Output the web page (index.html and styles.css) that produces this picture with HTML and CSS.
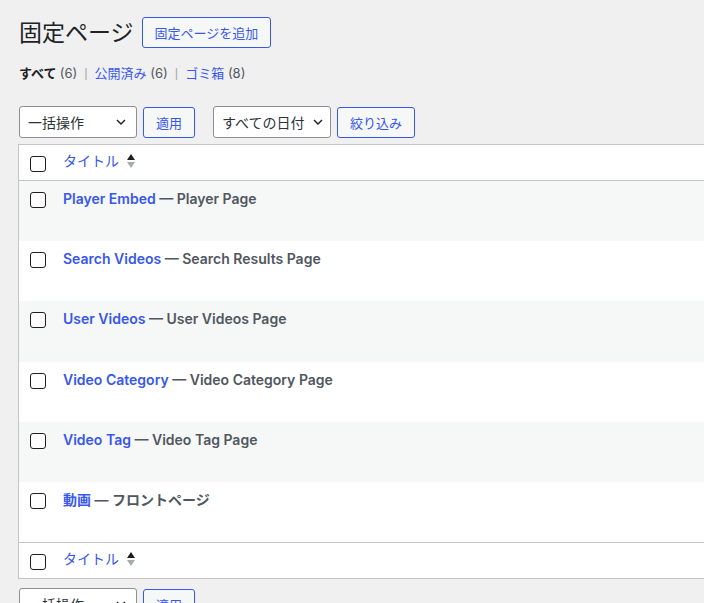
FILE: index.html
```html
<!DOCTYPE html>
<html lang="ja">
<head>
  <meta charset="UTF-8">
  <title>固定ページ</title>
  <link rel="stylesheet" href="styles.css">
</head>
<body>
  <div class="wrap">
    <!-- Page heading -->
    <div class="heading">
      <h1>固定ページ</h1>
      <a class="btn" href="#">固定ページを追加</a>
    </div>

    <ul class="subsubsub">
      <li class="current">すべて <span class="count">(6)</span></li>
      <li class="sep">|</li>
      <li><a href="#">公開済み</a> <span class="count">(6)</span></li>
      <li class="sep">|</li>
      <li><a href="#">ゴミ箱</a> <span class="count">(8)</span></li>
    </ul>

    <!-- Top toolbar -->
    <div class="tablenav">
      <div class="select bulk">
        <span>一括操作</span>
        <svg width="10" height="6" viewBox="0 0 10 6"><path d="M1 1l4 4 4-4" fill="none" stroke="#1e1e1e" stroke-width="1.4"/></svg>
      </div>
      <a class="btn" href="#">適用</a>
      <div class="select dates">
        <span>すべての日付</span>
        <svg width="10" height="6" viewBox="0 0 10 6"><path d="M1 1l4 4 4-4" fill="none" stroke="#1e1e1e" stroke-width="1.4"/></svg>
      </div>
      <a class="btn" href="#">絞り込み</a>
    </div>

    <table class="list">
      <thead>
        <tr class="head">
          <th class="check"><span class="box"></span></th>
          <th class="title"><a href="#">タイトル</a>
            <svg class="sort" width="10" height="16" viewBox="0 0 10 16"><path d="M5 1l4 6H1z" fill="#1e1e1e"/><path d="M5 15l4-6H1z" fill="#a7aaad"/></svg>
          </th>
        </tr>
      </thead>
      <tbody>
        <tr class="alt">
          <td class="check"><span class="box"></span></td>
          <td class="title"><a href="#">Player Embed</a> — Player Page</td>
        </tr>
        <tr>
          <td class="check"><span class="box"></span></td>
          <td class="title"><a href="#">Search Videos</a> — Search Results Page</td>
        </tr>
        <tr class="alt">
          <td class="check"><span class="box"></span></td>
          <td class="title"><a href="#">User Videos</a> — User Videos Page</td>
        </tr>
        <tr>
          <td class="check"><span class="box"></span></td>
          <td class="title"><a href="#">Video Category</a> — Video Category Page</td>
        </tr>
        <tr class="alt">
          <td class="check"><span class="box"></span></td>
          <td class="title"><a href="#">Video Tag</a> — Video Tag Page</td>
        </tr>
        <tr>
          <td class="check"><span class="box"></span></td>
          <td class="title"><a href="#">動画</a> — フロントページ</td>
        </tr>
      </tbody>
      <tfoot>
        <tr class="foot">
          <th class="check"><span class="box"></span></th>
          <th class="title"><a href="#">タイトル</a>
            <svg class="sort" width="10" height="16" viewBox="0 0 10 16"><path d="M5 1l4 6H1z" fill="#1e1e1e"/><path d="M5 15l4-6H1z" fill="#a7aaad"/></svg>
          </th>
        </tr>
      </tfoot>
    </table>

    <!-- Bottom toolbar -->
    <div class="tablenav bottom">
      <div class="select bulk">
        <span>一括操作</span>
        <svg width="10" height="6" viewBox="0 0 10 6"><path d="M1 1l4 4 4-4" fill="none" stroke="#1e1e1e" stroke-width="1.4"/></svg>
      </div>
      <a class="btn" href="#">適用</a>
    </div>
  </div>
</body>
</html>
```

FILE: styles.css
```css
html, body { overflow: hidden; }
body {
  margin: 0;
  background: #f0f0f1;
  color: #1e1e1e;
  font-family: Inter, "Noto Sans CJK JP", sans-serif;
  font-size: 13px;
}
a { color: #3858e9; text-decoration: none; }
.wrap { padding: 17px 0 0 18px; }

.heading { display: flex; align-items: center; gap: 8px; height: 31px; }
.heading h1 { margin: 0 0 0 1px; font-size: 23px; font-weight: 400; line-height: 30px; color: #1d2327; }

.btn {
  display: inline-flex;
  align-items: center;
  box-sizing: border-box;
  height: 31px;
  padding: 0 12px;
  border: 1px solid #3858e9;
  border-radius: 3px;
  background: #f6f7f7;
  color: #3858e9;
  font-size: 13px;
}

.subsubsub { list-style: none; margin: 12px 0 0 1px; padding: 0; display: flex; gap: 7px; line-height: 26px; color: #50575e; }
.subsubsub .current { color: #1e1e1e; font-weight: 700; }
.subsubsub .current .count { font-weight: 400; color: #50575e; }
.subsubsub .sep { color: #a7aaad; font-family: "Liberation Sans", sans-serif; }

.tablenav { display: flex; align-items: center; margin-top: 20px; height: 32px; }
.tablenav.bottom { margin-top: 9px; }
.select {
  display: flex;
  align-items: center;
  justify-content: space-between;
  box-sizing: border-box;
  height: 32px;
  padding: 0 10px 0 8px;
  border: 1px solid #8c8f94;
  border-radius: 3px;
  background: #fff;
  font-size: 14px;
  color: #2c3338;
}
.select.bulk { width: 118px; margin: 0 6px 0 1px; }
.select.dates { width: 118px; margin: 0 6px 0 18px; padding-right: 7px; }
.select svg { flex: none; }

.list {
  width: 760px;
  margin-top: 6px;
  border: 1px solid #c3c4c7;
  border-collapse: collapse;
  background: #fff;
}
.list th, .list td { text-align: left; vertical-align: top; padding: 0; }
.list .check { width: 44px; }
.list .box {
  display: block;
  box-sizing: border-box;
  width: 16px;
  height: 16px;
  margin: 11px 0 0 11px;
  border: 1px solid #1e1e1e;
  border-radius: 3px;
  background: #fff;
}
.list thead tr { height: 36px; border-bottom: 1px solid #c3c4c7; }
.list tfoot tr { height: 36px; border-top: 1px solid #c3c4c7; }
.list th.title { font-size: 14px; font-weight: 400; padding-top: 5px; }
.list th.title a { font-family: "Noto Sans CJK JP", sans-serif; }
.list .sort { vertical-align: -3px; margin-left: 3px; }

.list tbody tr { height: 60.4px; }
.list tbody tr.alt { background: #f6f7f7; }
.list td.title {
  padding: 7px 10px 0 0;
  font-size: 14px;
  font-weight: 600;
  line-height: 21px;
  color: #50575e;
}
.list td.title a { color: #3858e9; }
```
